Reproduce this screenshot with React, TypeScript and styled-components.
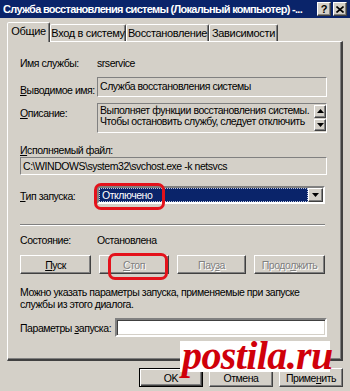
import React from "react";
import styled, { createGlobalStyle, css } from "styled-components";

const Global = createGlobalStyle`
  html, body { margin: 0; padding: 0; background: #d4d0c8; }
  body { font-family: "Liberation Sans", Arial, sans-serif; font-size: 10.5px; letter-spacing: -0.45px; color: #000; }
  * { box-sizing: border-box; }
`;

const Window = styled.div`
  position: relative;
  width: 350px;
  height: 391px;
  overflow: hidden;
  background: #d4d0c8;
`;

const TitleBar = styled.div`
  height: 18px;
  background: #0a246a;
  display: flex;
  align-items: center;
  gap: 2px;
  padding: 0 3px 0 3px;
`;

const Title = styled.div`
  flex: 1;
  color: #fff;
  font-family: "Liberation Sans", Arial, sans-serif;
  font-weight: bold;
  font-size: 11px;
  letter-spacing: -0.7px;
  white-space: nowrap;
  overflow: hidden;
`;

const CapBtn = styled.div`
  width: 14px;
  height: 14px;
  flex: none;
  background: #d4d0c8;
  border: 1px solid;
  border-color: #fff #404040 #404040 #fff;
  box-shadow: inset -1px -1px #808080;
  display: flex;
  align-items: center;
  justify-content: center;
  font-weight: bold;
  font-size: 11px;
  letter-spacing: 0;
  line-height: 1;
`;

const Body = styled.div`
  padding: 4px 7px 0 7px;
  display: flex;
  flex-direction: column;
`;

const TabStrip = styled.div`
  display: flex;
  align-items: flex-end;
  height: 19px;
  position: relative;
  z-index: 1;
`;

const Tab = styled.div<{ $w: number; $active?: boolean }>`
  width: ${(p) => p.$w}px;
  height: 17px;
  flex: none;
  background: #d4d0c8;
  border-style: solid;
  border-width: 1px 1px 0 1px;
  border-color: #fff #404040 transparent #fff;
  box-shadow: inset -1px 0 #808080;
  border-radius: 2px 2px 0 0;
  display: flex;
  align-items: center;
  justify-content: center;
  white-space: nowrap;
  font-size: 11px;
  letter-spacing: -0.35px;
  ${(p) =>
    p.$active &&
    css`
      height: 20px;
      margin-bottom: -1px;
      align-items: flex-start;
      padding-top: 2px;
    `}
`;

const Panel = styled.div`
  height: 320px;
  border-style: solid;
  border-width: 1px 2px 2px 1px;
  border-color: #fff #404040 #404040 #fff;
  box-shadow: inset -1px -1px #808080;
  padding: 14px 14px 0 12px;
  display: flex;
  flex-direction: column;
`;

const Row = styled.div<{ $mt?: number }>`
  display: flex;
  align-items: flex-start;
  margin-top: ${(p) => p.$mt ?? 0}px;
  line-height: 14px;
  white-space: nowrap;
`;

const Label = styled.div<{ $pt?: number; $w?: number }>`
  width: ${(p) => p.$w ?? 77}px;
  flex: none;
  padding-top: ${(p) => p.$pt ?? 0}px;
  line-height: 14px;
`;

const Value = styled.div`
  line-height: 14px;
`;

const ReadBox = styled.div<{ $h: number }>`
  flex: 1;
  height: ${(p) => p.$h}px;
  border: 1px solid;
  border-color: #808080 #fff #fff #808080;
  padding: 1px 2px 0 2px;
  line-height: 14px;
  white-space: nowrap;
  overflow: hidden;
`;

const DescBox = styled.div`
  flex: 1;
  height: 30px;
  border: 1px solid;
  border-color: #808080 #fff #fff #808080;
  display: flex;
`;

const DescText = styled.div`
  flex: 1;
  padding: 1px 2px 0 2px;
  line-height: 11px;
  white-space: nowrap;
  overflow: hidden;
`;

const ScrollCol = styled.div`
  width: 12px;
  display: flex;
  flex-direction: column;
  gap: 1px;
  padding: 1px 0;
`;

const ScrollBtn = styled.div`
  flex: 1;
  background: #d4d0c8;
  border: 1px solid;
  border-color: #fff #404040 #404040 #fff;
  box-shadow: inset -1px -1px #808080;
  display: flex;
  align-items: center;
  justify-content: center;
`;

const Combo = styled.div`
  position: relative;
  flex: 1;
  margin-right: 2px;
  height: 18px;
  border: 2px solid;
  border-color: #808080 #fff #fff #808080;
  display: flex;
  background: #fff;
`;

const ComboField = styled.div`
  flex: 1;
  background: #0a246a;
  color: #fff;
  padding: 0 3px;
  line-height: 14px;
  outline: 1px dotted #c0c8e0;
  outline-offset: -1px;
`;

const ComboBtn = styled.div`
  width: 15px;
  background: #d4d0c8;
  border: 1px solid;
  border-color: #fff #404040 #404040 #fff;
  box-shadow: inset -1px -1px #808080;
  display: flex;
  align-items: center;
  justify-content: center;
`;

const Highlight = styled.div<{ $l: number; $t: number; $w: number; $h: number }>`
  position: absolute;
  left: ${(p) => p.$l}px;
  top: ${(p) => p.$t}px;
  width: ${(p) => p.$w}px;
  height: ${(p) => p.$h}px;
  border: 3px solid #e4121b;
  border-radius: 7px;
  pointer-events: none;
`;

const Separator = styled.div<{ $mt: number }>`
  margin-top: ${(p) => p.$mt}px;
  margin-right: 2px;
  height: 2px;
  border-top: 1px solid #808080;
  border-bottom: 1px solid #fff;
`;

const ButtonRow = styled.div<{ $mt: number }>`
  display: flex;
  justify-content: space-between;
  margin-top: ${(p) => p.$mt}px;
  margin-right: 2px;
`;

const Button = styled.div<{ $w: number; $h?: number; $disabled?: boolean; $default?: boolean }>`
  position: relative;
  width: ${(p) => p.$w}px;
  height: ${(p) => p.$h ?? 19}px;
  flex: none;
  background: #d4d0c8;
  border: 1px solid;
  border-color: #fff #404040 #404040 #fff;
  box-shadow: inset -1px -1px #808080;
  display: flex;
  align-items: center;
  justify-content: center;
  white-space: nowrap;
  ${(p) =>
    p.$disabled &&
    css`
      color: #808080;
      text-shadow: 1px 1px 0 #fff;
    `}
  ${(p) =>
    p.$default &&
    css`
      border: 1px solid #000;
      box-shadow: inset 1px 1px #fff, inset -1px -1px #404040, inset -2px -2px #808080;
    `}
`;

const Note = styled.div<{ $mt: number }>`
  margin-top: ${(p) => p.$mt}px;
  line-height: 12px;
  white-space: nowrap;
`;

const Input = styled.div`
  flex: 1;
  height: 19px;
  background: #fff;
  border: 2px solid;
  border-color: #808080 #fff #fff #808080;
  box-shadow: inset 1px 1px #404040, inset -1px -1px #d4d0c8;
`;

const Footer = styled.div`
  display: flex;
  justify-content: flex-end;
  gap: 6px;
  margin-top: 7px;
`;

const Watermark = styled.div`
  position: absolute;
  left: 180px;
  top: 341px;
  height: 31px;
  width: 150px;
  background: #fff;
  color: #d0000a;
  font-family: "Liberation Serif", "DejaVu Serif", serif;
  font-weight: bold;
  font-style: italic;
  font-size: 40px;
  line-height: 29px;
  padding-left: 2px;
  letter-spacing: -0.6px;
  white-space: nowrap;
`;

const U = styled.span`
  text-decoration: underline;
  text-underline-offset: 1px;
`;

const ArrowUp = () => (
  <svg width="7" height="4" viewBox="0 0 7 4">
    <path d="M3.5 0 L7 4 L0 4 Z" fill="#000" />
  </svg>
);
const ArrowDown = () => (
  <svg width="7" height="4" viewBox="0 0 7 4">
    <path d="M0 0 L7 0 L3.5 4 Z" fill="#000" />
  </svg>
);
const CloseGlyph = () => (
  <svg width="8" height="7" viewBox="0 0 8 7">
    <path d="M0.5 0.5 L7.5 6.5 M7.5 0.5 L0.5 6.5" stroke="#000" strokeWidth="1.6" />
  </svg>
);

export default function App() {
  return (
    <>
      <Global />
      <Window>
        <TitleBar>
          <Title>Служба восстановления системы (Локальный компьютер) -...</Title>
          <CapBtn>?</CapBtn>
          <CapBtn>
            <CloseGlyph />
          </CapBtn>
        </TitleBar>
        <Body>
          <TabStrip>
            <Tab $w={43} $active>
              Общие
            </Tab>
            <Tab $w={76}>Вход в систему</Tab>
            <Tab $w={83}>Восстановление</Tab>
            <Tab $w={69}>Зависимости</Tab>
          </TabStrip>
          <Panel>
            <Row>
              <Label>Имя службы:</Label>
              <Value>srservice</Value>
            </Row>
            <Row $mt={7}>
              <Label $pt={6}>
                <U>В</U>ыводимое имя:
              </Label>
              <ReadBox $h={20}>Служба восстановления системы</ReadBox>
            </Row>
            <Row $mt={6}>
              <Label $pt={3}>
                <U>О</U>писание:
              </Label>
              <DescBox>
                <DescText>
                  Выполняет функции восстановления системы.
                  <br />
                  Чтобы остановить службу, следует отключить
                </DescText>
                <ScrollCol>
                  <ScrollBtn>
                    <ArrowUp />
                  </ScrollBtn>
                  <ScrollBtn>
                    <ArrowDown />
                  </ScrollBtn>
                </ScrollCol>
              </DescBox>
            </Row>
            <Row $mt={10}>
              <Value>
                <U>И</U>сполняемый файл:
              </Value>
            </Row>
            <Row>
              <ReadBox $h={18}>C:\WINDOWS\system32\svchost.exe -k netsvcs</ReadBox>
            </Row>
            <Row $mt={11}>
              <Label $pt={3}>
                <U>Т</U>ип запуска:
              </Label>
              <Combo>
                <ComboField>Отключено</ComboField>
                <ComboBtn>
                  <ArrowDown />
                </ComboBtn>
                <Highlight $l={-5} $t={-5} $w={71} $h={27} />
              </Combo>
            </Row>
            <Separator $mt={20} />
            <Row $mt={7}>
              <Label>Состояние:</Label>
              <Value>Остановлена</Value>
            </Row>
            <ButtonRow $mt={8}>
              <Button $w={71}>
                <span>
                  <U>П</U>уск
                </span>
              </Button>
              <Button $w={70} $disabled>
                <span>
                  <U>С</U>топ
                </span>
                <Highlight $l={8} $t={-3} $w={60} $h={27} />
              </Button>
              <Button $w={69} $disabled>
                <span>
                  Пау<U>з</U>а
                </span>
              </Button>
              <Button $w={71} $disabled>
                <span>
                  Продо<U>л</U>жить
                </span>
              </Button>
            </ButtonRow>
            <Note $mt={12}>
              Можно указать параметры запуска, применяемые при запуске
              <br />
              службы из этого диалога.
            </Note>
            <Row $mt={8}>
              <Label $w={95} $pt={3}>
                Параметры <U>з</U>апуска:
              </Label>
              <Input />
            </Row>
          </Panel>
          <Footer>
            <Button $w={64} $h={19} $default>
              OK
            </Button>
            <Button $w={64} $h={19}>
              Отмена
            </Button>
            <Button $w={64} $h={19}>
              <span>
                Приме<U>н</U>ить
              </span>
            </Button>
          </Footer>
        </Body>
        <Watermark>postila.ru</Watermark>
      </Window>
    </>
  );
}
